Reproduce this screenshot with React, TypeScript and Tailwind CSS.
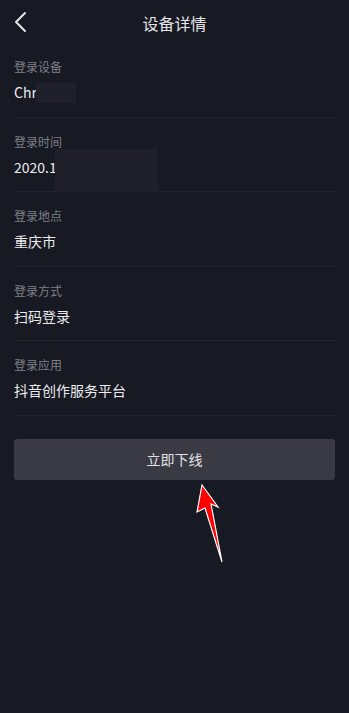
const rows = [
  { label: "登录设备", value: "Chr", blur: "w-[40px] h-[21px] -ml-[1px]" },
  { label: "登录时间", value: "2020.1", blur: "w-[103px] h-[43px] -ml-[2px] -my-[11px] translate-y-[4px]" },
  { label: "登录地点", value: "重庆市" },
  { label: "登录方式", value: "扫码登录" },
  { label: "登录应用", value: "抖音创作服务平台" },
]

const DeviceDetail = () => {
  return (
    <div
      className="relative w-[349px] h-[713px] bg-[#171923] overflow-hidden"
      style={{ fontFamily: '"Noto Sans CJK SC", "Noto Sans", sans-serif' }}
    >
      {/* Top bar */}
      <div className="relative flex items-center justify-center h-[43px]">
        <button className="absolute left-0 top-0 w-[40px] h-[43px]">
          <svg width="40" height="43" viewBox="0 0 40 43">
            <polyline
              points="25,13 16,22 25,31"
              fill="none"
              stroke="#e6e6e8"
              strokeWidth="2"
              strokeLinecap="round"
              strokeLinejoin="round"
            />
          </svg>
        </button>
        <h1 className="text-[16px] text-[#e6e6e8] leading-none mt-[2px]">设备详情</h1>
      </div>

      {/* Info rows */}
      <div className="px-[14px]">
        {rows.map((row) => (
          <div key={row.label} className="h-[74.5px] border-b border-[#23252f] pt-[15px]">
            <div className="h-[17px] text-[12px] leading-[17px] text-[#7f8088]">{row.label}</div>
            <div className="flex items-center h-[20px] mt-[7px] text-[14px] leading-[20px] text-[#ececee]">
              <span>{row.value}</span>
              {row.blur && <span className={`${row.blur} bg-[#1f2029]`} />}
            </div>
          </div>
        ))}
      </div>

      {/* Offline button */}
      <div className="px-[14px] mt-[23px]">
        <button className="w-full h-[41px] rounded-[3px] bg-[#393a44] text-[14px] text-[#e2e2e6]">
          立即下线
        </button>
      </div>

      {/* Red annotation arrow */}
      <svg
        className="absolute left-0 top-0 pointer-events-none"
        width="349"
        height="713"
        viewBox="0 0 349 713"
      >
        <polygon
          points="202,485 218,507 211,504 222,562 205,508 197,512"
          fill="#ff0000"
          stroke="#ffffff"
          strokeWidth="1.2"
          strokeLinejoin="miter"
        />
      </svg>
    </div>
  )
}

export default DeviceDetail
